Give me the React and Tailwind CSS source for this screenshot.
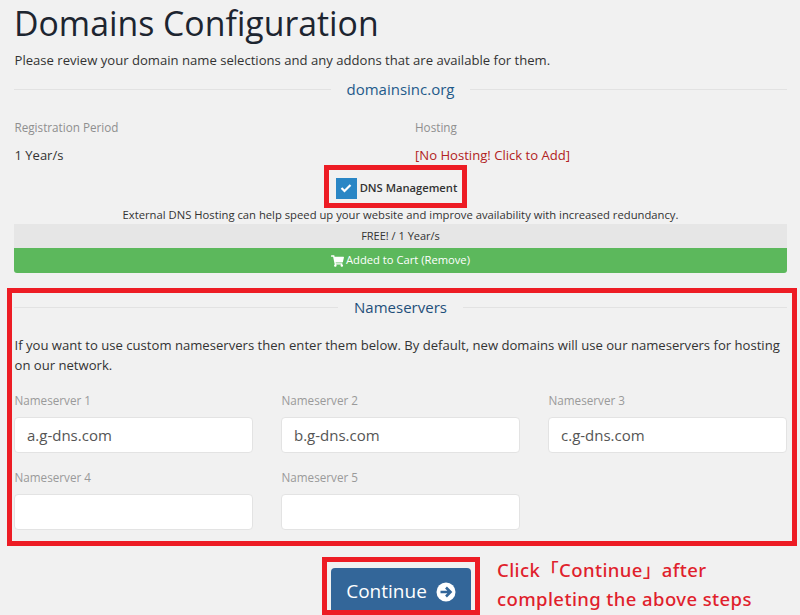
import React from "react";

function Divider({ children, textClass }) {
  return (
    <div className="flex items-center gap-4">
      <div className="h-px flex-1 bg-[#e2e2e2]" />
      <div className={textClass}>{children}</div>
      <div className="h-px flex-1 bg-[#e2e2e2]" />
    </div>
  );
}

function NS({ label, value }) {
  return (
    <div>
      <div className="h-[19px] pl-[0.5px] text-[11.7px] leading-[19px] text-[#9a9a9a]">{label}</div>
      <div className="mt-[7px] flex h-[36px] items-center rounded-[4px] border border-[#e3e3e3] bg-white px-[12px] text-[15px] text-[#555]">
        {value}
      </div>
    </div>
  );
}

export default function App() {
  return (
    <div className="relative h-[615px] w-[800px] overflow-hidden bg-[#f1f1f1] pl-[14px] pr-[13px] font-['Open_Sans',sans-serif] text-[#333]">
      <h1 className="h-[47px] text-[33.8px] leading-[47px] text-[#1d2530]">Domains Configuration</h1>
      <p className="mt-[3px] h-[20px] pl-[0.5px] text-[13.1px] leading-[20px] text-[#333]">
        Please review your domain name selections and any addons that are available for them.
      </p>
      <div className="mt-[9px] h-[22px]">
        <Divider textClass="text-[15px] leading-[21px] text-[#1f5a8a]">domainsinc.org</Divider>
      </div>

      <div className="mt-[16px] grid grid-cols-2">
        <div>
          <div className="h-[20px] pl-[0.5px] text-[11.7px] leading-[20px] text-[#8f8f8f]">Registration Period</div>
          <div className="mt-[8px] h-[20px] pl-[0.5px] text-[13px] leading-[20px] text-[#333]">1 Year/s</div>
        </div>
        <div className="pl-[14.5px]">
          <div className="h-[20px] text-[11.7px] leading-[20px] text-[#8f8f8f]">Hosting</div>
          <div className="mt-[8px] h-[20px] text-[13.1px] leading-[20px] text-[#b22222]">[No Hosting! Click to Add]</div>
        </div>
      </div>

      <div className="mt-[11px] flex h-[24px] items-center justify-center pr-[8px]">
        <div className="flex h-[21px] w-[21px] items-center justify-center bg-[#2a86c5]">
          <svg width="12" height="10" viewBox="0 0 12 10" fill="none" stroke="white" strokeWidth="2.2">
            <path d="M1.5 5 L4.5 8 L10.5 2" />
          </svg>
        </div>
        <span className="ml-[3px] text-[11.2px] font-semibold text-[#333]">DNS Management</span>
      </div>
      <p className="mt-[5px] h-[20px] text-center text-[11.25px] leading-[20px] text-[#333]">
        External DNS Hosting can help speed up your website and improve availability with increased redundancy.
      </p>
      <div className="-mt-[1px] h-[24px] bg-[#e6e6e6] text-center text-[11px] leading-[24px] text-[#333]">
        FREE! / 1 Year/s
      </div>
      <div className="flex h-[25px] items-center justify-center rounded-b-[3px] bg-[#5cb85c] text-[11.2px] text-white">
        <svg width="13" height="12" viewBox="0 0 576 512" fill="white" className="mr-[2px]">
          <path d="M528 301 575 93c3-15-8-29-23-29H159l-9-47C148 7 139 0 128 0H24C11 0 0 11 0 24v16c0 13 11 24 24 24h70l70 343c-17 10-28 28-28 49 0 31 25 56 56 56s56-25 56-56c0-16-6-30-17-40h210c-11 10-17 24-17 40 0 31 25 56 56 56s56-25 56-56c0-22-13-41-32-50l5-24c3-15-8-29-23-29H212l-7-32h300c11 0 21-8 23-19z" />
        </svg>
        Added to Cart (Remove)
      </div>

      <div className="mt-[23px] h-[22px]">
        <Divider textClass="text-[15px] leading-[22px] text-[#1f4f7a]">Nameservers</Divider>
      </div>
      <p className="mt-[17px] pl-[0.5px] text-[13.1px] leading-[20px] text-[#333]">
        If you want to use custom nameservers then enter them below. By default, new domains will use our nameservers for hosting on our network.
      </p>
      <div className="mt-[16px] grid grid-cols-3 gap-x-[28px] gap-y-[15px]">
        <NS label="Nameserver 1" value="a.g-dns.com" />
        <NS label="Nameserver 2" value="b.g-dns.com" />
        <NS label="Nameserver 3" value="c.g-dns.com" />
        <NS label="Nameserver 4" value="" />
        <NS label="Nameserver 5" value="" />
      </div>

      <div className="mt-[38px] flex">
        <div className="ml-[317px] flex h-[60px] w-[140px] items-start justify-center gap-[9px] rounded-t-[4px] bg-[#336699] pt-[9px] text-[19px] text-white">
          Continue
          <svg width="20" height="20" viewBox="0 0 20 20" className="mt-[5px]">
            <circle cx="10" cy="10" r="9.5" fill="white" />
            <path d="M4.5 10h10M10 5.5 14.5 10 10 14.5" fill="none" stroke="#336699" strokeWidth="2.6" />
          </svg>
        </div>
        <div className="ml-[26px] -mt-[13px] font-['Noto_Sans','Noto_Sans_CJK_JP',sans-serif] text-[18.5px] leading-[29px] font-medium tracking-[0.4px] text-[#e01f2d]">
          Click「Continue」after
          <br />
          completing the above steps
        </div>
      </div>

      <div className="absolute left-[324px] top-[165px] h-[43px] w-[143px] border-[5px] border-[#ed1c24]" />
      <div className="absolute left-[7px] top-[288px] h-[258px] w-[790px] border-[5px] border-[#ed1c24]" />
      <div className="absolute left-[322px] top-[557px] h-[58px] w-[158px] border-[5px] border-[#ed1c24]" />
    </div>
  );
}
